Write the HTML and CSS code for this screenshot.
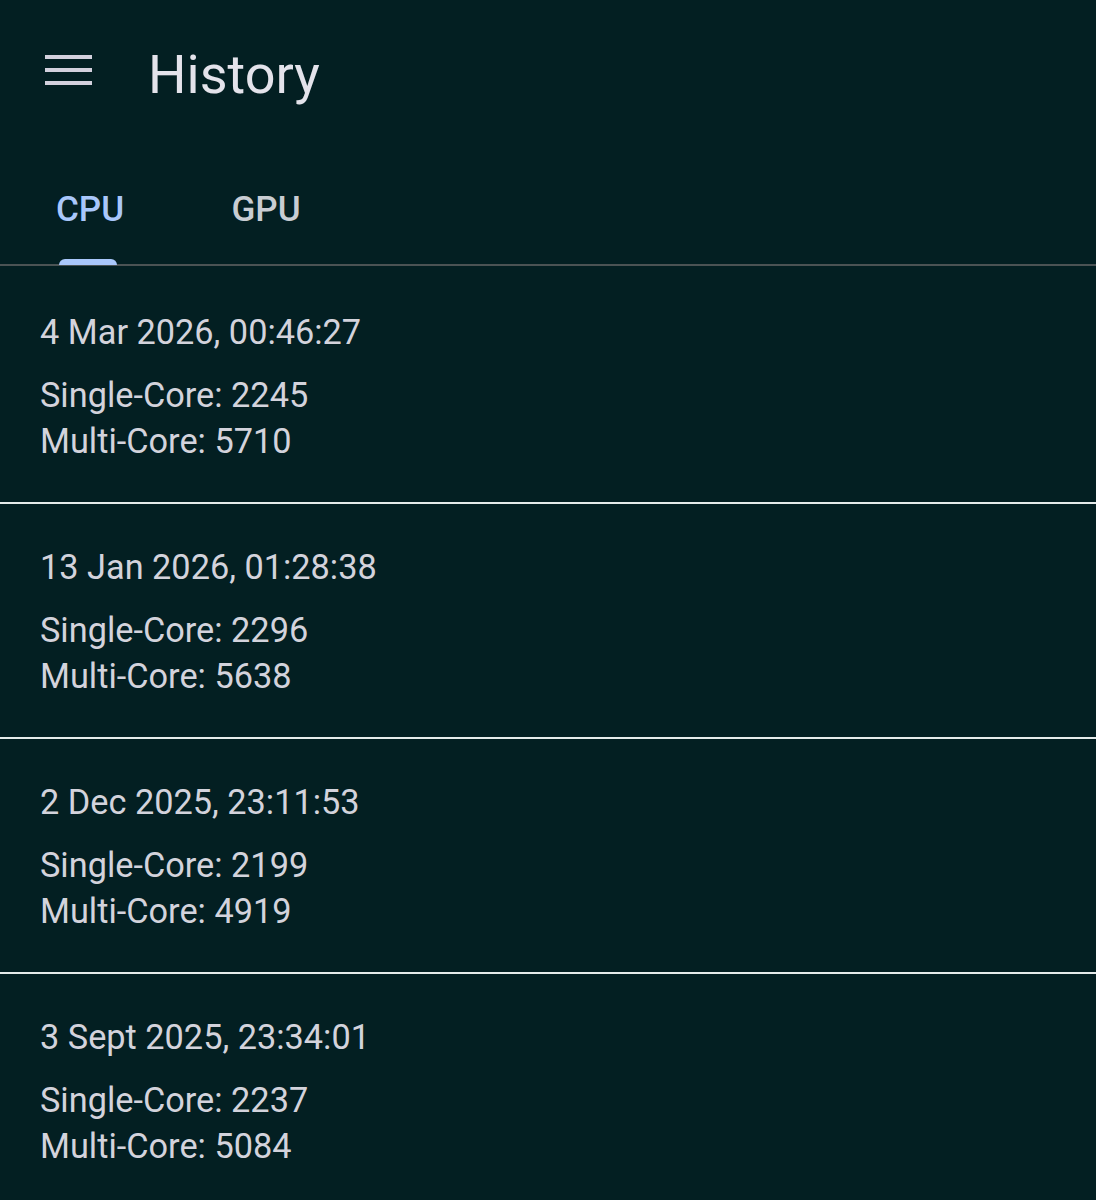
FILE: index.html
```html
<!DOCTYPE html>
<html lang="en">
<head>
    <meta charset="UTF-8">
    <meta name="viewport" content="width=device-width, initial-scale=1.0">
    <title>History</title>
    <link rel="stylesheet" href="styles.css">
</head>
<body>
    <header class="app-bar">
        <svg class="menu-icon" width="47" height="30" viewBox="0 0 47 30">
            <rect x="0" y="0" width="47" height="4" fill="#d3d0dd"/>
            <rect x="0" y="13" width="47" height="4" fill="#d3d0dd"/>
            <rect x="0" y="26" width="47" height="4" fill="#d3d0dd"/>
        </svg>
        <h1>History</h1>
    </header>

    <nav class="tabs">
        <div class="tab active">CPU<span class="indicator"></span></div>
        <div class="tab">GPU</div>
    </nav>

    <ul class="history-list">
        <li class="entry">
            <p class="date">4 Mar 2026, 00:46:27</p>
            <p class="score">Single-Core: 2245</p>
            <p class="score">Multi-Core: 5710</p>
        </li>
        <li class="entry">
            <p class="date">13 Jan 2026, 01:28:38</p>
            <p class="score">Single-Core: 2296</p>
            <p class="score">Multi-Core: 5638</p>
        </li>
        <li class="entry">
            <p class="date">2 Dec 2025, 23:11:53</p>
            <p class="score">Single-Core: 2199</p>
            <p class="score">Multi-Core: 4919</p>
        </li>
        <li class="entry">
            <p class="date">3 Sept 2025, 23:34:01</p>
            <p class="score">Single-Core: 2237</p>
            <p class="score">Multi-Core: 5084</p>
        </li>
    </ul>
</body>
</html>
```

FILE: styles.css
```css
body {
    font-family: Roboto, "Noto Sans", sans-serif;
    background-color: #031f22;
    color: #d3d3dc;
    margin: 0;
    overflow: hidden;
}

.app-bar {
    display: flex;
    align-items: flex-start;
    height: 148px;
    padding-left: 45px;
}

.menu-icon {
    margin-top: 55px;
}

h1 {
    margin: 48px 0 0 56px;
    font-size: 54px;
    line-height: 54px;
    font-weight: 400;
    color: #e4e3eb;
}

.tabs {
    display: flex;
    height: 116px;
    border-bottom: 2px solid #4b5354;
}

.tab {
    position: relative;
    width: 176px;
    padding-top: 45px;
    text-align: center;
    font-size: 35px;
    line-height: 34px;
    font-weight: 500;
    color: #c9cdd3;
}

.tab.active {
    color: #a9c7fb;
    padding-left: 2px;
}

.indicator {
    position: absolute;
    left: 59px;
    bottom: -1px;
    width: 58px;
    height: 6px;
    background-color: #a9c7fb;
    border-radius: 6px 6px 0 0;
}

.history-list {
    list-style: none;
    margin: 0;
    padding: 3px 0 0;
}

.entry {
    padding: 40px 40px 38px;
    border-bottom: 2px solid #e4ebea;
}

.entry p {
    margin: 0;
    font-size: 34.3px;
    line-height: 46px;
}

.entry .date {
    margin-bottom: 17px;
}
```
